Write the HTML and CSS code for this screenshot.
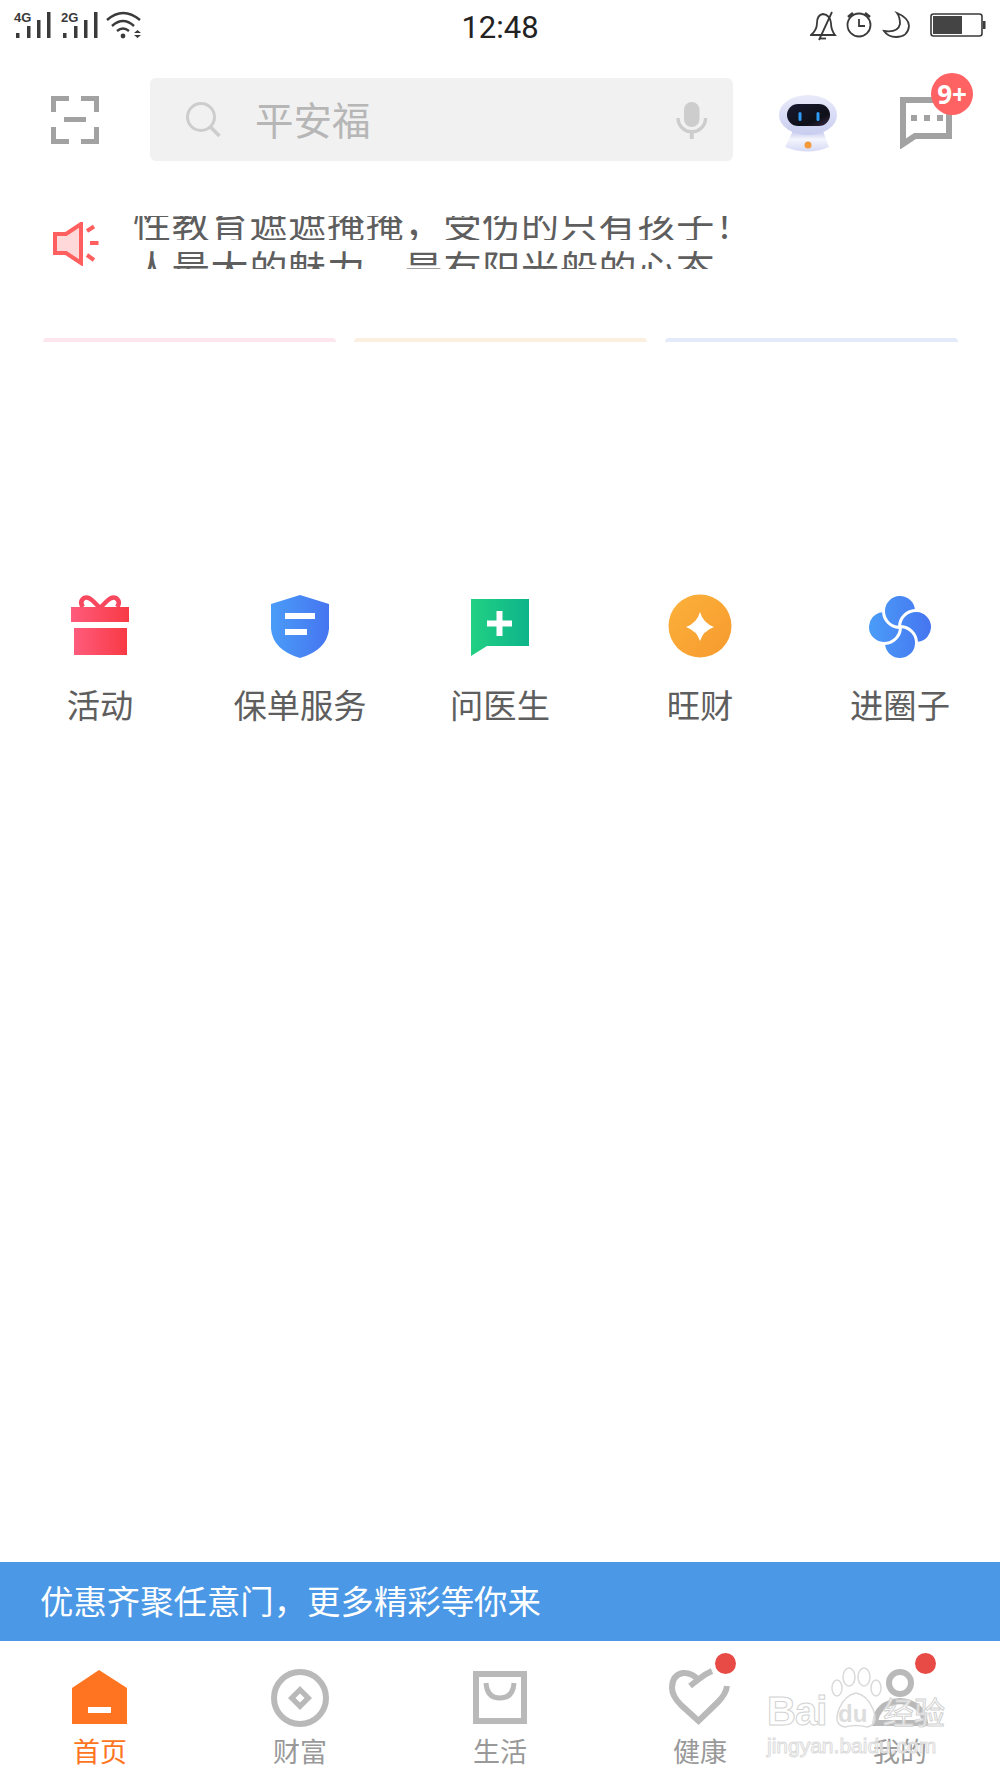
FILE: index.html
```html
<!DOCTYPE html>
<html lang="zh">
<head>
<meta charset="utf-8">
<title>平安金管家</title>
<link rel="stylesheet" href="styles.css">
</head>
<body>
<div class="page">
  <div class="status">
    <svg class="status-left" width="150" height="50" viewBox="0 0 150 50">
      <text x="14" y="22" class="net">4G</text>
      <g fill="#3a3a3a">
        <rect x="16" y="33" width="3.5" height="5"/><rect x="27" y="26" width="3.5" height="12"/><rect x="37" y="20" width="3.5" height="18"/><rect x="47" y="12" width="3.5" height="26"/>
      </g>
      <text x="61" y="22" class="net">2G</text>
      <g fill="#3a3a3a">
        <rect x="63" y="33" width="3.5" height="5"/><rect x="74" y="26" width="3.5" height="12"/><rect x="84" y="20" width="3.5" height="18"/><rect x="94" y="12" width="3.5" height="26"/>
      </g>
      <g fill="none" stroke="#3a3a3a" stroke-width="2.4">
        <path d="M107 20 Q123 6 140 20"/><path d="M112 26 Q123 16 134 26"/><path d="M117 31 Q123 26 129 31"/>
      </g>
      <circle cx="123" cy="36" r="2.4" fill="#3a3a3a"/>
      <path d="M134 33h7l-3.500-3zM134 35h7l-3.500 3z" fill="#3a3a3a"/>
    </svg>
    <div class="time">12:48</div>
    <svg class="status-right" width="190" height="50" viewBox="810 0 190 50">
      <g fill="none" stroke="#3a3a3a" stroke-width="1.800">
        <path d="M811 35 Q817 30 817 23 Q817 15 823 14 Q830 15 831 23 Q831 30 835 35 Z"/>
        <path d="M819 40 L832 12"/>
        <path d="M820 38.500h6"/>
        <circle cx="859" cy="25" r="11.500"/>
        <path d="M859 19v7h6"/>
        <path d="M848 17l5-4M870 17l-5-4" stroke-width="2.600"/>
        <path d="M897 13 Q909 18 909 26 Q908 37 896 37 Q888 37 884 31 Q898 33 900 24 Q900 17 897 13Z"/>
      </g>
      <rect x="931" y="14" width="51" height="22" rx="2.500" fill="none" stroke="#3a3a3a" stroke-width="1.600"/>
      <rect x="933" y="16" width="29" height="18" fill="#444"/>
      <rect x="983" y="21" width="2.500" height="8" fill="#3a3a3a"/>
    </svg>
  </div>

  <header class="topbar">
    <svg class="scan" width="48" height="48" viewBox="0 0 48 48">
      <path d="M2.500 16V2.500H18M30 2.500h15.500V16M2.500 31v14.500H18M30 45.500h15.500V31" fill="none" stroke="#a2a2a2" stroke-width="5"/>
      <rect x="13" y="21" width="22" height="5" fill="#a2a2a2"/>
    </svg>
    <div class="search">
      <svg class="search-icon" width="38" height="38" viewBox="0 0 38 38">
        <circle cx="17" cy="17" r="13.500" fill="none" stroke="#cdcdcd" stroke-width="3"/>
        <path d="M26.500 27l9 9" stroke="#cdcdcd" stroke-width="3.500"/>
      </svg>
      <span class="placeholder">平安福</span>
      <svg class="mic" width="32" height="38" viewBox="0 0 32 38">
        <rect x="8" y="1" width="15.500" height="25" rx="7.700" fill="#cdcdcd"/>
        <path d="M2 17a13.800 13.800 0 0 0 27.600 0" fill="none" stroke="#cdcdcd" stroke-width="3.400"/>
        <rect x="13.800" y="30" width="4" height="8" fill="#cdcdcd"/>
      </svg>
    </div>
    <svg class="robot" width="60" height="60" viewBox="0 0 60 60">
      <defs>
        <linearGradient id="rb" x1="0" y1="0" x2="0" y2="1"><stop offset="0" stop-color="#e9ebfa"/><stop offset="1" stop-color="#c8cdf0"/></linearGradient>
        <linearGradient id="rt" x1="0" y1="0" x2="0" y2="1"><stop offset="0" stop-color="#c3c8ec"/><stop offset=".4" stop-color="#f4f5fd"/><stop offset="1" stop-color="#d6daf5"/></linearGradient>
        <linearGradient id="rf" x1="0" y1="0" x2="1" y2="1"><stop offset="0" stop-color="#161a30"/><stop offset=".7" stop-color="#0f1018"/><stop offset="1" stop-color="#3a2a4a"/></linearGradient>
      </defs>
      <path d="M15 36 H45 L51 52 Q30 61 7 52Z" fill="url(#rt)"/>
      <circle cx="30" cy="50" r="3.500" fill="#f59a3a"/>
      <ellipse cx="30" cy="20" rx="29" ry="20" fill="url(#rb)"/>
      <rect x="9" y="9" width="43" height="22" rx="11" fill="url(#rf)"/>
      <rect x="20.500" y="17" width="3" height="9" rx="1.500" fill="#2e9cf5"/>
      <rect x="38.500" y="17" width="3" height="9" rx="1.500" fill="#2e9cf5"/>
    </svg>
    <div class="chat">
      <svg width="52" height="52" viewBox="0 0 52 52">
        <path d="M3 3H49V39H15L3 47Z" fill="none" stroke="#a2a2a2" stroke-width="6"/>
        <rect x="11" y="18" width="6" height="6" fill="#a2a2a2"/><rect x="24" y="18" width="6" height="6" fill="#a2a2a2"/><rect x="37" y="18" width="6" height="6" fill="#a2a2a2"/>
      </svg>
      <span class="badge">9+</span>
    </div>
  </header>

  <section class="notice">
    <svg class="horn" width="46" height="44" viewBox="0 0 46 44">
      <path d="M2 12H13L28 2V41L13 31H2Z" fill="#ffd9d9" stroke="#ff5f5f" stroke-width="4"/>
      <path d="M34 9l7-4.500M37 21h8.500M34 33l7 5" stroke="#ff5f5f" stroke-width="4"/>
    </svg>
    <div class="ticker">
      <div class="ticker-track">
        <p class="ticker-line">性教育遮遮掩掩，受伤的只有孩子！</p>
        <p class="ticker-line">人最大的魅力，是有阳光般的心态</p>
      </div>
    </div>
  </section>

  <section class="cards">
    <div class="card card-pink"></div>
    <div class="card card-cream"></div>
    <div class="card card-blue"></div>
  </section>

  <nav class="quick">
    <div class="quick-item">
      <svg width="62" height="66" viewBox="0 0 62 66">
        <defs><linearGradient id="gr" x1="0" y1="0" x2="1" y2="0"><stop offset="0" stop-color="#ff5b7c"/><stop offset="1" stop-color="#f83a45"/></linearGradient></defs>
        <path d="M31 14 L24 7 Q19 2 15 4 Q10 8 14 13 M31 14 L38 7 Q43 2 47 4 Q52 8 48 13" fill="none" stroke="#f8485f" stroke-width="4.500"/>
        <rect x="2" y="13" width="58" height="15" fill="url(#gr)"/>
        <rect x="5" y="34" width="53" height="27" fill="url(#gr)"/>
      </svg>
      <span>活动</span>
    </div>
    <div class="quick-item">
      <svg width="62" height="66" viewBox="0 0 62 66">
        <defs><linearGradient id="gb" x1="0" y1="0" x2="1" y2="0"><stop offset="0" stop-color="#4a9cf8"/><stop offset="1" stop-color="#4675f0"/></linearGradient></defs>
        <path d="M31 1 L60 10 V35 Q58 56 31 64 Q4 56 2 35 V10 Z" fill="url(#gb)"/>
        <rect x="16" y="19" width="30" height="6" fill="#fff"/><rect x="16" y="35" width="22" height="6" fill="#fff"/>
      </svg>
      <span>保单服务</span>
    </div>
    <div class="quick-item">
      <svg width="62" height="66" viewBox="0 0 62 66">
        <defs><linearGradient id="gg" x1="0" y1="0" x2="1" y2="0"><stop offset="0" stop-color="#22d083"/><stop offset="1" stop-color="#0db48a"/></linearGradient></defs>
        <path d="M2 5H60V52H18L2 62Z" fill="url(#gg)"/>
        <path d="M27.500 17h6v9.500H43v6h-9.500V42h-6v-9.500H18v-6h9.500Z" fill="#fff"/>
      </svg>
      <span>问医生</span>
    </div>
    <div class="quick-item">
      <svg width="64" height="66" viewBox="0 0 64 66">
        <defs><linearGradient id="go" x1="0" y1="0" x2="1" y2="1"><stop offset="0" stop-color="#fbb13a"/><stop offset="1" stop-color="#f79a2f"/></linearGradient></defs>
        <circle cx="32" cy="32" r="31.500" fill="url(#go)"/>
        <path d="M32 18 Q35 29 46 33 Q35 37 32 47 Q29 37 18 33 Q29 29 32 18Z" fill="#fff"/>
      </svg>
      <span>旺财</span>
    </div>
    <div class="quick-item">
      <svg width="62" height="66" viewBox="-31 -33 62 66">
        <defs><linearGradient id="gp" gradientUnits="userSpaceOnUse" x1="-31" y1="0" x2="31" y2="0"><stop offset="0" stop-color="#4a9cf8"/><stop offset="1" stop-color="#4675f0"/></linearGradient></defs>
        <g fill="url(#gp)">
          <path d="M14.860 -17.960 A15 15 0 1 0 -1.960 -1.140 A18 18 0 0 1 14.860 -17.960Z"/>
          <path d="M17.960 14.860 A15 15 0 1 0 1.140 -1.960 A18 18 0 0 1 17.960 14.860Z"/>
          <path d="M-14.860 17.960 A15 15 0 1 0 1.960 1.140 A18 18 0 0 1 -14.860 17.960Z"/>
          <path d="M-17.960 -14.860 A15 15 0 1 0 -1.140 1.960 A18 18 0 0 1 -17.960 -14.860Z"/>
        </g>
      </svg>
      <span>进圈子</span>
    </div>
  </nav>

  <div class="spacer"></div>

  <div class="banner">优惠齐聚任意门，更多精彩等你来</div>

  <footer class="tabs">
    <div class="tab tab-active">
      <svg width="62" height="62" viewBox="0 0 62 62">
        <path d="M30 3 L58 21 V57 H3 V21Z" fill="#ff7420"/>
        <rect x="19" y="40" width="23" height="6" fill="#fff"/>
      </svg>
      <span>首页</span>
    </div>
    <div class="tab">
      <svg width="62" height="62" viewBox="0 0 62 62">
        <circle cx="31" cy="31" r="26" fill="none" stroke="#b9b9b9" stroke-width="6"/>
        <path d="M31 19 L43 31 L31 43 L19 31Z M31 26.500 L26.500 31 L31 35.500 L35.500 31Z" fill="#b9b9b9" fill-rule="evenodd"/>
      </svg>
      <span>财富</span>
    </div>
    <div class="tab">
      <svg width="62" height="62" viewBox="0 0 62 62">
        <rect x="7" y="7" width="48" height="47" fill="none" stroke="#b9b9b9" stroke-width="6"/>
        <path d="M17 16 Q18 31 31 31 Q44 31 45 16" fill="none" stroke="#b9b9b9" stroke-width="5"/>
      </svg>
      <span>生活</span>
    </div>
    <div class="tab">
      <div class="dot-wrap">
        <svg width="62" height="62" viewBox="0 0 62 62">
          <path d="M21 19 L30 12 Q36 7 43 4 M30 13 Q22 5 14 6 Q3 8 3 21 Q3 29 12 38 L29.500 54 L49 35 Q57 27 58 19" fill="none" stroke="#b9b9b9" stroke-width="6"/>
        </svg>
        <i class="dot"></i>
      </div>
      <span>健康</span>
    </div>
    <div class="tab">
      <div class="dot-wrap">
        <svg width="62" height="62" viewBox="0 0 62 62">
          <circle cx="31" cy="16" r="11" fill="none" stroke="#b9b9b9" stroke-width="6"/>
          <path d="M6 56 Q8 36 31 34 Q54 36 56 56Z" fill="none" stroke="#b9b9b9" stroke-width="6"/>
        </svg>
        <i class="dot"></i>
      </div>
      <span>我的</span>
    </div>
  </footer>

  <div class="watermark">
    <div class="wm-row">
      <span class="wm-bai">Bai</span>
      <span class="wm-paw">
        <svg width="54" height="66" viewBox="0 0 54 66">
          <g fill="rgba(255,255,255,.55)" stroke="#d9d9d9" stroke-width="1.500">
            <ellipse cx="8" cy="21" rx="5" ry="8"/><ellipse cx="20" cy="10" rx="6" ry="9"/><ellipse cx="35" cy="10" rx="6" ry="9"/><ellipse cx="47" cy="21" rx="5" ry="8"/>
            <path d="M27 26 Q38 28 44 42 Q50 58 38 60 Q27 57 16 60 Q4 58 10 42 Q16 28 27 26Z"/>
          </g>
        </svg>
        <span class="wm-du">du</span>
      </span>
      <span class="wm-jy">经验</span>
    </div>
    <div class="wm-url">jingyan.baidu.com</div>
  </div>
</div>
</body>
</html>
```
FILE: styles.css
```css
* { box-sizing: border-box; }
html, body { margin: 0; padding: 0; background: #fff; }
.page {
  position: relative;
  width: 1000px;
  height: 1778px;
  display: flex;
  flex-direction: column;
  overflow: hidden;
  font-family: "Noto Sans CJK SC", "Noto Sans", sans-serif;
  color: #555;
  background: #fff;
}
svg { display: block; }

/* status bar */
.status { height: 50px; display: grid; grid-template-columns: 1fr auto 1fr; align-items: center; flex: none; }
.status-left { justify-self: start; }
.status-right { justify-self: end; }
.net { font: bold 13px "Liberation Sans", sans-serif; fill: #3a3a3a; }
.time { font: 400 31px Roboto, sans-serif; color: #222; margin-top: 4px; }

/* top bar */
.topbar { height: 83px; margin-top: 28px; display: flex; align-items: center; flex: none; }
.scan { margin-left: 51px; margin-top: 1px; flex: none; }
.search {
  margin-left: 51px;
  width: 583px;
  height: 83px;
  background: #f1f1f1;
  border-radius: 6px;
  display: flex;
  align-items: center;
  padding-left: 34px;
  flex: none;
}
.search-icon { flex: none; margin-top: -2px; }
.placeholder { font-size: 38.5px; line-height: 1; color: #b6b6b6; margin-left: 33px; margin-top: -2px; flex: 1; }
.mic { flex: none; margin-right: 25px; margin-top: 1px; }
.robot { margin-left: 45px; margin-top: 11px; flex: none; }
.chat { position: relative; margin-left: 62px; margin-top: 6px; flex: none; }
.badge {
  position: absolute;
  left: 31px;
  top: -24px;
  width: 42px;
  height: 42px;
  border-radius: 50%;
  background: #ff6263;
  color: #fff;
  font: bold 26px/42px "Noto Sans", sans-serif;
  text-align: center;
}

/* notice */
.notice { display: flex; margin-top: 55px; height: 53px; flex: none; }
.horn { margin-left: 53px; margin-top: 6px; flex: none; }
.ticker { margin-left: 34px; width: 640px; height: 53px; overflow: hidden; }
.ticker-track { margin-top: -17px; }
.ticker-line { margin: 0 0 4px; font-size: 38px; line-height: 45px; height: 41px; overflow: hidden; letter-spacing: .8px; white-space: nowrap; color: #5e5e5e; }

/* cards */
.cards { display: flex; gap: 18px; margin: 69px 42px 0 43px; height: 4px; flex: none; }
.card { flex: 1; border-radius: 5px 5px 0 0; }
.card-pink { background: #fde6ee; }
.card-cream { background: #fbf0e0; }
.card-blue { background: #e3ebfb; }

/* quick */
.quick { display: flex; margin-top: 252px; flex: none; }
.quick-item { width: 200px; display: flex; flex-direction: column; align-items: center; }
.quick-item span { font-size: 33.3px; line-height: 44px; margin-top: 22px; color: #5e5e5e; }

.spacer { flex: 1; }

/* banner */
.banner { height: 79px; background: #4a98e6; color: #fff; font-size: 33.4px; line-height: 76px; padding-left: 40px; flex: none; }

/* tabs */
.tabs { height: 137px; display: flex; flex: none; padding-top: 26px; }
.tab { width: 200px; display: flex; flex-direction: column; align-items: center; color: #999; }
.tab span { font-size: 27px; line-height: 36px; margin-top: 4px; }
.tab-active { color: #ff7420; }
.dot-wrap { position: relative; }
.dot { position: absolute; left: 46px; top: -14px; width: 21px; height: 21px; border-radius: 50%; background: #e84a46; }

/* watermark */
.watermark { position: absolute; left: 767px; top: 1661px; width: 180px; }
.wm-row { display: flex; align-items: flex-end; height: 72px; }
.wm-bai, .wm-jy { color: rgba(255,255,255,.7); -webkit-text-stroke: 1px #d2d2d2; }
.wm-bai { font: bold 40px/44px "Liberation Sans", sans-serif; width: 62px; letter-spacing: -1px; }
.wm-paw { position: relative; width: 54px; flex: none; }
.wm-du { position: absolute; left: 9px; bottom: 4px; font: bold 24px/30px "Liberation Sans", sans-serif; color: #ddd; }
.wm-jy { font-size: 31px; line-height: 44px; width: 64px; white-space: nowrap; }
.wm-url { font: 21px/26px "Liberation Sans", sans-serif; color: rgba(255,255,255,.6); -webkit-text-stroke: 1px #dcdcdc; margin-top: 0; white-space: nowrap; }
```
